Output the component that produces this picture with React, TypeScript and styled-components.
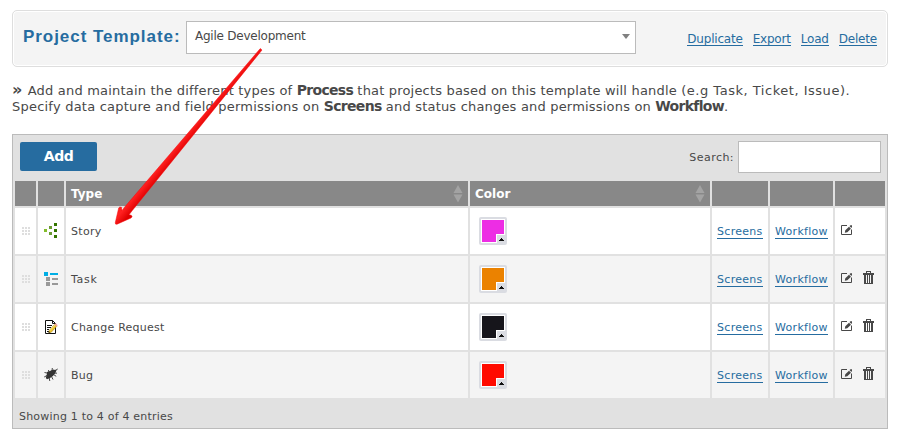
import React from 'react';
import styled, { createGlobalStyle } from 'styled-components';

const Global = createGlobalStyle`
  * { box-sizing: border-box; }
  body { margin: 0; background: #fff; color: #484848; font: 11px/16px "DejaVu Sans", Verdana, sans-serif; }
`;

const Page = styled.main`
  position: relative;
  width: 898px;
  height: 443px;
  padding: 10px 10px 0 12px;
  overflow: hidden;
`;

const TemplateBar = styled.header`
  display: flex;
  width: 876px;
  height: 57px;
  padding: 9px 10px 0 9px;
  border: 1px solid #dedede;
  border-radius: 5px;
  background: #f4f4f4;
  box-shadow: inset 0 0 0 1px #fff;
`;

const Title = styled.h1`
  width: 164px;
  margin: 6px 0 0;
  padding-left: 1px;
  color: #266ca0;
  font: bold 17px/22px "Liberation Sans", Arial, sans-serif;
  letter-spacing: 0.95px;
  white-space: nowrap;
`;

const Select = styled.div`
  display: flex;
  justify-content: space-between;
  width: 450px;
  height: 33px;
  margin-top: 1px;
  padding: 6px 5px 0 8px;
  border: 1px solid #bbb;
  background: #fff;
  font-size: 12px;
  letter-spacing: -0.23px;
`;

const Caret = styled.i`
  width: 0;
  height: 0;
  margin-top: 6px;
  border: 4.5px solid transparent;
  border-top: 5px solid #808080;
  border-bottom: 0;
`;

const Link = styled.a<{ $spacing?: number }>`
  color: #266ca0;
  letter-spacing: ${p => p.$spacing ?? 0.3}px;
  text-decoration: none;
  border-bottom: 1px solid #266ca0;
  line-height: 12px;
  white-space: nowrap;
`;

const BarLinks = styled.nav`
  display: flex;
  gap: 10px;
  height: 13px;
  margin: 13px 0 0 auto;
  font-size: 12px;
`;

const Intro = styled.section`
  height: 67px;
  padding-top: 16px;
  font-size: 13px;
  line-height: 16px;
  white-space: nowrap;
`;

const Line = styled.p`
  height: 16px;
  margin: 0;
`;

const Phrase = styled.span<{ $spacing: number }>`
  letter-spacing: ${p => p.$spacing}px;
`;

const Marker = styled.b`
  margin-right: 1px;
  font-size: 16px;
  line-height: 14px;
`;

const Strong = styled.b`
  font-size: 14px;
  line-height: 14px;
  letter-spacing: -0.7px;
`;

const Panel = styled.section`
  width: 876px;
  height: 295px;
  padding: 0 2px;
  border: 1px solid #bbb;
  background: #e1e1e1;
`;

const Toolbar = styled.div`
  display: flex;
  justify-content: space-between;
  height: 46px;
  padding: 7px 4px 0 5px;
`;

const AddButton = styled.button`
  width: 77px;
  height: 29px;
  padding: 0;
  border: 0;
  border-radius: 2px;
  background: #266ca0;
  color: #fff;
  font: bold 14px/29px "DejaVu Sans", Verdana, sans-serif;
  letter-spacing: -0.5px;
`;

const Search = styled.label`
  display: flex;
  gap: 4px;
  line-height: 34px;
  letter-spacing: 0.45px;
  margin-top: -1px;
`;

const SearchInput = styled.input`
  width: 143px;
  height: 32px;
  padding: 4px;
  border: 1px solid #bbb;
  background: #fff;
`;

const Row = styled.div<{ $head?: boolean; $odd?: boolean }>`
  display: grid;
  grid-template-columns: 21px 26px 402px 240px 56px 63px 50px;
  gap: 2px;
  height: ${p => (p.$head ? 25 : 46)}px;
  margin-bottom: 2px;

  > div {
    display: flex;
    align-items: center;
    background: ${p => (p.$head ? '#888' : p.$odd ? '#f4f4f4' : '#fff')};
  }
`;

const HeadCell = styled.div`
  justify-content: space-between;
  padding: 0 5px;
  color: #fff;
  font-size: 12px;
  font-weight: bold;
  letter-spacing: 0;
`;

const TextCell = styled.div<{ $spacing?: number }>`
  padding: 2px 0 0 5px;
  letter-spacing: ${p => p.$spacing ?? 0}px;
`;

const IconCell = styled.div`
  justify-content: center;
  padding-bottom: 2px;
`;

const GripCell = styled.div`
  padding-left: 7px;
`;

const ColorCell = styled.div`
  padding-left: 9px;
`;

const ActionCell = styled.div`
  gap: 11px;
  padding: 0 0 2px 5px;
`;

const SwatchFrame = styled.div`
  width: 28px;
  height: 28px;
  padding: 2px;
  border-radius: 2px;
  background: #dadce2;
`;

const Swatch = styled.div<{ $color: string }>`
  display: flex;
  align-items: flex-end;
  justify-content: flex-end;
  width: 24px;
  height: 24px;
  border: 1px solid #fff;
  background: ${p => p.$color};
`;

const SwatchToggle = styled.span`
  display: flex;
  align-items: center;
  justify-content: center;
  width: 9px;
  height: 9px;
  margin: 0 -1px -1px 0;
  border: solid #fff;
  border-width: 1px 0 0 1px;
  background: #dadce2;
`;

const Footer = styled.footer`
  padding: 9px 4px;
  line-height: 16px;
  letter-spacing: 0.2px;
`;

const Overlay = styled.svg`
  position: absolute;
  left: 100px;
  top: 40px;
  pointer-events: none;
`;

const Grip = () => (
  <svg width="8" height="8" shapeRendering="crispEdges" fill="#dedede">
    {[0, 3, 6].map(y => [0, 3, 6].map(x => <rect key={`${x}${y}`} x={x} y={y} width="2" height="2" />))}
  </svg>
);

const Sorter = () => (
  <svg width="10" height="18" fill="#a3a3a3">
    <path d="M5 0L9.5 8H.5zM.5 9.5h9L5 17.5z" />
  </svg>
);

const StoryIcon = () => (
  <svg width="14" height="16" shapeRendering="crispEdges">
    <path fill="#83bd2b" d="M0 7h3v3H0z" />
    <path fill="#6a9a32" d="M5 4h3v3H5zM5 10h3v3H5z" />
    <path fill="#347500" d="M10 1h3v3h-3zM10 7h3v3h-3zM10 13h3v3h-3z" />
  </svg>
);

const TaskIcon = () => (
  <svg width="14" height="16" shapeRendering="crispEdges">
    <path fill="#00aee5" d="M0 2h4v4H0zM6 3h8v2H6z" />
    <path fill="#999" d="M2 7h4v4H2zM8 8h6v2H8zM2 12h4v4H2zM8 13h6v2H8z" />
  </svg>
);

const ChangeIcon = () => (
  <svg width="14" height="16" viewBox="0 0 14 16">
    <path fill="#fff" stroke="#111" d="M1.5 2.5h7l3 3v10h-10z" />
    <path fill="none" stroke="#111" d="M8.500 2.500v3h3M3 7.500h5M3 9.500h4M3 11.500h2M3 13.500h2" />
    <path fill="#eec52c" stroke="#9a741d" strokeWidth=".5" d="M5.300 12.200l5.500-5.900 2 2-5.500 5.900-2.600.7z" />
    <path fill="#efa39c" d="M10.500 6.500l1.300-1.300 2 2-1.300 1.300z" />
    <path fill="none" stroke="#fff29b" strokeWidth=".7" d="M6 12.500l5-5.400" />
    <path fill="#222" d="M4.500 15l.5-1.600 1.100 1.100z" />
  </svg>
);

const BugIcon = () => (
  <svg width="14" height="16" viewBox="0 0 14 16">
    <path fill="#333" d="M3 6l3-1 2-1 2-.5.5.5 2-.5-.5 2-1 2-2 2.500-3 2-3 1.200L1.800 12l1-3.500z" />
    <path fill="none" stroke="#333" strokeWidth=".9" d="M3 7L.5 6.500M3 9.500L.2 11M5 11l.8 4M7.500 10.500l1.500 3M9.500 8.500l2.700 1.800M5 6.500L4.500 4M8 5l.3-3M11.500 4.500l2.200-1.500M10 7l3 .2" />
  </svg>
);

const EditIcon = () => (
  <svg width="12" height="12">
    <path fill="none" stroke="#484848" d="M7 1.500h-5.500v9h10v-5" />
    <path fill="#484848" d="M4.800 8.700l.5-2.400L9 2.700l2 2-3.700 3.500zM9.500 2.100l1-.9h1.500v1.800l-.7 1.100z" />
  </svg>
);

const TrashIcon = () => (
  <svg width="11" height="14" shapeRendering="crispEdges">
    <path fill="#484848" fillRule="evenodd" d="M3 0h5v2h3v2h-1v9H1V4H0V2h3zM4 1v1h3V1zM3 4v8h1V4zM5 4v8h1V4zM7 4v8h1V4z" />
  </svg>
);

const rows = [
  { name: 'Story', color: '#ed2de4', icon: <StoryIcon />, spacing: 0.3 },
  { name: 'Task', color: '#eb8200', icon: <TaskIcon />, spacing: 0.7, removable: true },
  { name: 'Change Request', color: '#16151b', icon: <ChangeIcon />, spacing: 0.23, removable: true },
  { name: 'Bug', color: '#ff0a00', icon: <BugIcon />, spacing: 0.2, removable: true },
];

const Arrow = () => (
  <Overlay width="170" height="190" viewBox="100 40 170 190">
    <defs>
      <linearGradient id="shaft" gradientUnits="userSpaceOnUse" x1="190" y1="130" x2="196" y2="135">
        <stop offset="0" stopColor="#ff2020" />
        <stop offset="1" stopColor="#e00000" />
      </linearGradient>
    </defs>
    <path
      fill="url(#shaft)"
      stroke="#f4080b"
      strokeWidth=".5"
      strokeLinejoin="round"
      d="M260.300 48.500L262 50 132.300 210.500L129 214.800 131.200 215.200Q133 216.500 131 218L117 224.200Q115 224.800 115.300 222.500L118.700 208Q119.500 206.300 121.500 207.300L122 210.500L125.300 206.300Z"
    />
  </Overlay>
);

export default function App() {
  return (
    <Page>
      <Global />
      <TemplateBar>
        <Title>Project Template:</Title>
        <Select>Agile Development<Caret /></Select>
        <BarLinks>
          {['Duplicate', 'Export', 'Load', 'Delete'].map(t => <Link key={t} $spacing={-0.2}>{t}</Link>)}
        </BarLinks>
      </TemplateBar>
      <Intro>
        <Line>
          <Marker>»</Marker>
          <Phrase $spacing={0.2}> Add and maintain the different types of </Phrase>
          <Strong>Process</Strong>
          <Phrase $spacing={0.18}> that projects based on this template will handle </Phrase>
          <Phrase $spacing={0.52}>(e.g Task, Ticket, Issue).</Phrase>
        </Line>
        <Line>
          <Phrase $spacing={0.22}>Specify data capture and field permissions on </Phrase>
          <Strong>Screens</Strong>
          <Phrase $spacing={0.19}> and status changes and permissions on </Phrase>
          <Strong>Workflow</Strong>.
        </Line>
      </Intro>
      <Panel>
        <Toolbar>
          <AddButton>Add</AddButton>
          <Search>Search:<SearchInput /></Search>
        </Toolbar>
        <Row $head>
          <div /><div />
          <HeadCell>Type<Sorter /></HeadCell>
          <HeadCell>Color<Sorter /></HeadCell>
          <div /><div /><div />
        </Row>
        {rows.map((row, i) => (
          <Row key={row.name} $odd={i % 2 === 1}>
            <GripCell><Grip /></GripCell>
            <IconCell>{row.icon}</IconCell>
            <TextCell $spacing={row.spacing}>{row.name}</TextCell>
            <ColorCell>
              <SwatchFrame>
                <Swatch $color={row.color}>
                  <SwatchToggle>
                    <svg width="5" height="3" fill="#111" shapeRendering="crispEdges"><path d="M2 0h1v1h1v1h1v1H0V2h1V1h1z" /></svg>
                  </SwatchToggle>
                </Swatch>
              </SwatchFrame>
            </ColorCell>
            <TextCell><Link>Screens</Link></TextCell>
            <TextCell><Link>Workflow</Link></TextCell>
            <ActionCell><EditIcon />{row.removable && <TrashIcon />}</ActionCell>
          </Row>
        ))}
        <Footer>Showing 1 to 4 of 4 entries</Footer>
      </Panel>
      <Arrow />
    </Page>
  );
}
